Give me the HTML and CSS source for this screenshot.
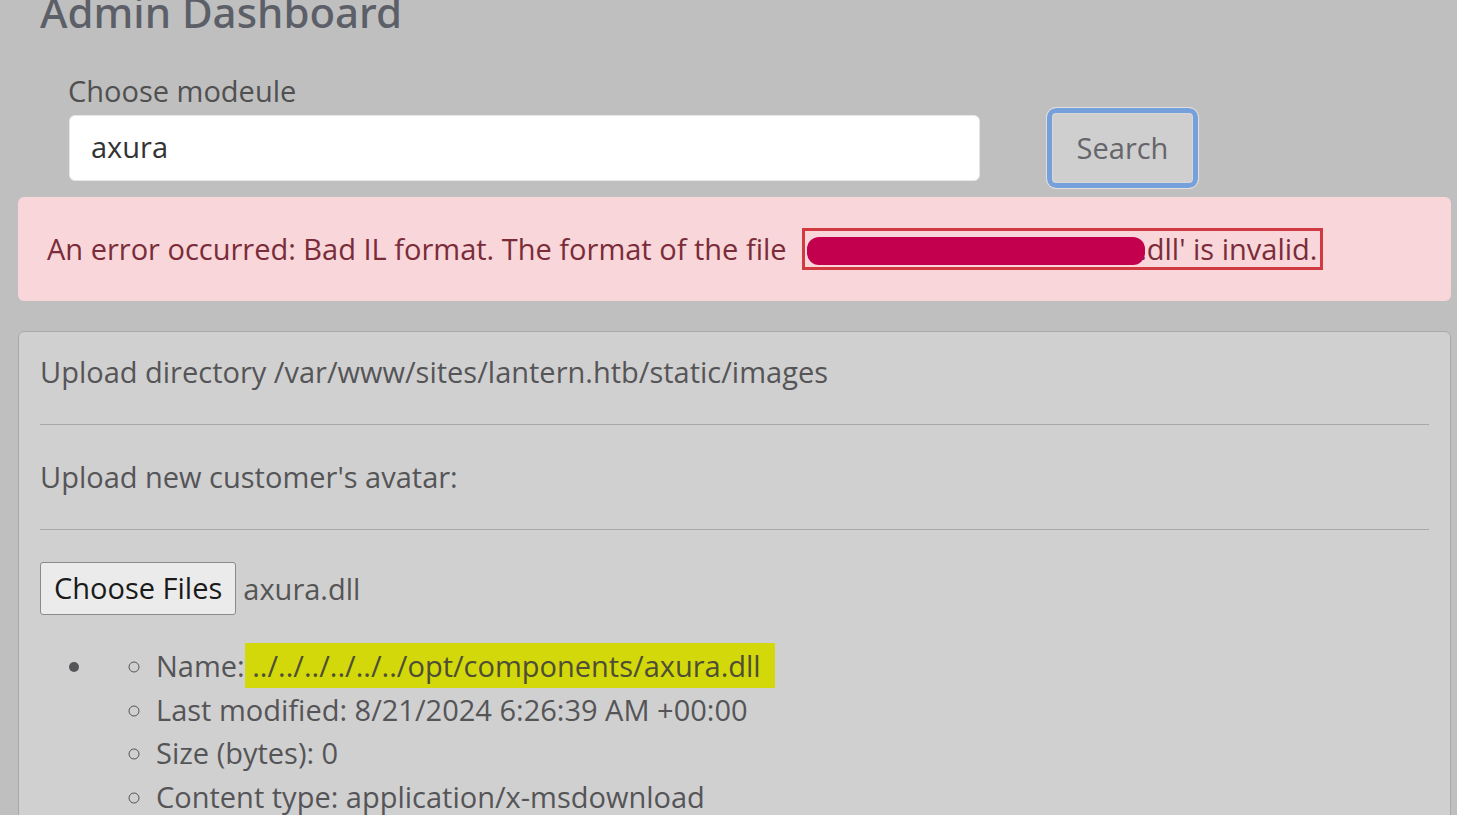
FILE: index.html
```html
<!DOCTYPE html>
<html lang="en">
<head>
<meta charset="utf-8">
<title>Admin Dashboard</title>
<link rel="stylesheet" href="styles.css">
</head>
<body>
<div class="page">
  <h1 class="title">Admin Dashboard</h1>
  <div class="module">
    <label class="label" for="mod">Choose modeule</label>
    <div class="search-row">
      <input id="mod" class="input" type="text" value="axura">
      <button class="btn-search" type="button">Search</button>
    </div>
  </div>
  <div class="alert">An error occurred: Bad IL format. The format of the file <span class="mark-box"><span class="redact"></span>.dll' is invalid.</span></div>
  <div class="card">
    <p class="row">Upload directory /var/www/sites/lantern.htb/static/images</p>
    <hr class="sep">
    <p class="row">Upload new customer's avatar:</p>
    <hr class="sep">
    <div class="file-row">
      <span class="file-btn">Choose Files</span>
      <span class="file-name">axura.dll</span>
    </div>
    <ul class="outer">
      <li>
        <ul class="inner">
          <li>Name:<span class="hl"> ../../../../../../opt/components/axura.dll</span></li>
          <li>Last modified: 8/21/2024 6:26:39 AM +00:00</li>
          <li>Size (bytes): 0</li>
          <li>Content type: application/x-msdownload</li>
        </ul>
      </li>
    </ul>
  </div>
</div>
</body>
</html>
```
FILE: styles.css
```css
html, body {
  margin: 0;
  padding: 0;
  background: #bfbfbf;
  overflow: hidden;
}
body {
  font-family: "Open Sans", "Noto Sans", sans-serif;
  font-size: 29px;
  color: #555558;
}
.page {
  padding: 0 6px 0 18px;
}
.title {
  margin: -17px 0 0 22px;
  font-family: "Noto Sans", "Open Sans", sans-serif;
  font-weight: 500;
  font-size: 42px;
  line-height: 57px;
  color: #5c5f68;
}
.module {
  margin: 31px 0 0 50px;
}
.label {
  display: block;
  line-height: 40px;
  color: #505050;
}
.search-row {
  display: flex;
  align-items: center;
  height: 66px;
  margin-top: 4px;
}
.input {
  box-sizing: border-box;
  width: 911px;
  height: 66px;
  margin-left: 1px;
  border: 1px solid #e6e6e6;
  border-radius: 6px;
  background: #fff;
  padding: 0 21px 4px;
  font-family: inherit;
  font-size: 29px;
  color: #333;
  outline: none;
}
.btn-search {
  box-sizing: border-box;
  flex: none;
  margin: -1px 0 0 66px;
  width: 153px;
  height: 82px;
  border: 1px solid #e0e0e0;
  border-radius: 10px;
  background: #cfcfcf;
  box-shadow: 0 0 0 5px #76a0dc inset, 0 0 0 6px #d8d8d8 inset;
  font-family: inherit;
  font-size: 29px;
  color: #65656a;
  padding: 0;
}
.alert {
  margin-top: 16px;
  padding: 31px 28px 31px 29px;
  line-height: 40px;
  background: #f8d6da;
  border-radius: 6px;
  color: #7a2c38;
}
.mark-box {
  display: inline-block;
  box-sizing: border-box;
  height: 42px;
  line-height: 36px;
  padding: 0 3px 0 2px;
  margin-left: 8px;
  border: 3px solid #d23a42;
}
.redact {
  position: relative;
  display: inline-block;
  width: 338px;
  height: 28px;
  margin-right: -6px;
  border-radius: 12px;
  background: #c2004d;
  vertical-align: -5px;
  z-index: 1;
}
.card {
  margin-top: 30px;
  height: 600px;
  border: 1px solid #a9a9a9;
  border-radius: 6px;
  background: #d0d0d0;
  padding: 20px 21px;
}
.row {
  margin: 0;
  line-height: 40px;
}
.sep {
  margin: 32px 0;
  border: 0;
  border-top: 1px solid #a8a8a8;
}
.file-row {
  display: flex;
  align-items: center;
  gap: 7px;
  margin-top: 26px;
}
.file-btn {
  box-sizing: border-box;
  height: 53px;
  line-height: 50px;
  padding: 0 13px;
  border: 1px solid #8a8a8a;
  border-radius: 3px;
  background: #ebebeb;
  color: #1a1a1a;
}
.file-name {
  color: #555;
}
.outer {
  margin: 29px 0 0;
  padding-left: 56px;
  list-style: disc;
  line-height: 43.7px;
}
.inner {
  margin: 0;
  padding-left: 60px;
  list-style: circle;
}
.hl {
  background: #d3d80a;
  padding: 3px 14px 3px 0;
  color: #4e4e36;
}
```
